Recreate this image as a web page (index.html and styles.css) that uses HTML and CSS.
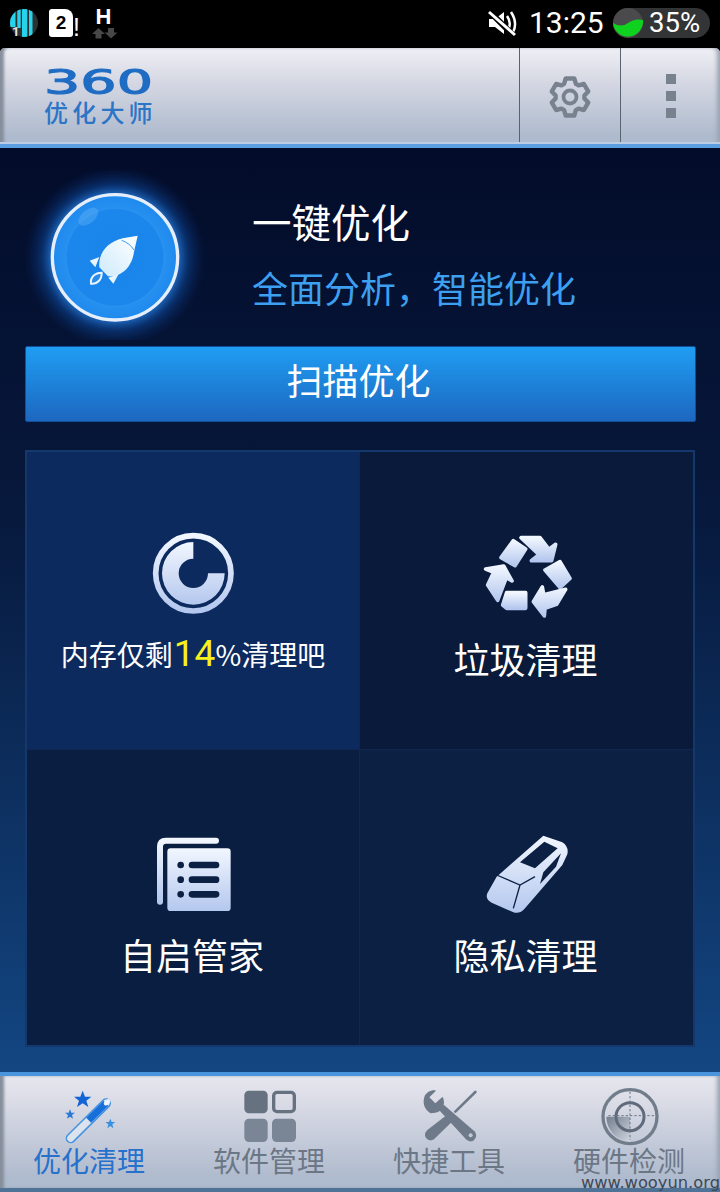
FILE: index.html
```html
<!DOCTYPE html>
<html lang="zh">
<head>
<meta charset="utf-8">
<title>360优化大师</title>
<link rel="stylesheet" href="styles.css">
</head>
<body>
<div class="page">
  <div class="status">
    <svg class="st-signal" width="40" height="40" viewBox="0 0 40 40">
      <defs><clipPath id="sigclip"><circle cx="24" cy="23" r="14"/></clipPath></defs>
      <circle cx="24" cy="23" r="14" fill="#2e3033"/>
      <g clip-path="url(#sigclip)" fill="#27d3ea">
        <rect x="10" y="9" width="5.500" height="18"/>
        <rect x="17.300" y="9" width="3.400" height="19"/>
        <rect x="22" y="9" width="5.300" height="28"/>
        <rect x="29" y="9" width="3.500" height="28"/>
      </g>
    </svg>
    <span class="st-one">1</span>
    <span class="st-sim">2</span>
    <span class="st-bang">!</span>
    <div class="st-h">
      <span class="st-h-letter">H</span>
      <svg width="26" height="11" viewBox="0 0 26 11"><path d="M6.500 0 L13 6 H9.500 V10.500 H3.500 V6 H0 Z" fill="#484848"/><path d="M16 0 H22 V4.500 H25.500 L19 10.500 L12.500 4.500 H16 Z" fill="#484848"/></svg>
    </div>
    <div class="st-right">
      <svg class="st-mute" width="30" height="28" viewBox="0 0 30 28">
        <path d="M1 9 H7 L16 2 V24 L7 17 H1 Z" fill="#fff"/>
        <path d="M19 6 Q24 13 20 20 M23 2 Q30 13 25 22" fill="none" stroke="#fff" stroke-width="2.500"/>
        <path d="M1 1 L26 26" stroke="#000" stroke-width="6"/>
        <path d="M1 2 L27 25" stroke="#fff" stroke-width="3"/>
      </svg>
      <span class="st-time">13:25</span>
      <div class="battery">
        <svg width="30" height="30" viewBox="0 0 30 30">
          <circle cx="15" cy="15" r="15" fill="#4a4a4c"/>
          <path d="M0 15 Q8 20 15 15 T30 12 A15 15 0 0 1 0 15 Z" fill="#0fd11f"/>
        </svg>
        <span class="batt-text">35%</span>
      </div>
    </div>
  </div>

  <header class="topbar">
    <div class="logo">
      <div class="logo-num"><span>360</span></div>
      <div class="logo-name">优化大师</div>
    </div>
    <div class="top-cell">
      <svg class="gear" width="48" height="48" viewBox="-24 -24 48 48">
        <polygon points="-5.900,-13.200 -4.300,-18.500 4.300,-18.500 5.900,-13.200 8.500,-11.700 13.900,-13 18.200,-5.600 14.400,-1.500 14.400,1.500 18.200,5.600 13.900,13 8.500,11.700 5.900,13.200 4.300,18.500 -4.300,18.500 -5.900,13.200 -8.500,11.700 -13.900,13 -18.200,5.600 -14.400,1.500 -14.400,-1.500 -18.200,-5.600 -13.900,-13 -8.500,-11.700" fill="none" stroke="#78828f" stroke-width="4.400" stroke-linejoin="round"/>
        <circle r="6.500" fill="none" stroke="#78828f" stroke-width="3.800"/>
      </svg>
    </div>
    <div class="top-cell top-menu">
      <i class="dot"></i><i class="dot"></i><i class="dot"></i>
    </div>
  </header>

  <main class="main">
    <section class="hero">
      <svg class="hero-icon" width="200" height="170" viewBox="0 0 600 510">
        <defs>
          <radialGradient id="glow" cx="50%" cy="50%" r="50%">
            <stop offset="0.68" stop-color="#2b8cf5" stop-opacity="0.75"/>
            <stop offset="0.80" stop-color="#0f58b8" stop-opacity="0.42"/>
            <stop offset="1" stop-color="#0a2a66" stop-opacity="0"/>
          </radialGradient>
          <radialGradient id="disc" cx="50%" cy="50%" r="50%">
            <stop offset="0" stop-color="#1983ea"/>
            <stop offset="0.76" stop-color="#1b87ec"/>
            <stop offset="0.79" stop-color="#2590ef"/>
            <stop offset="1" stop-color="#1f8aee"/>
          </radialGradient>
          <linearGradient id="rocket" x1="1" y1="0" x2="0" y2="1">
            <stop offset="0" stop-color="#ffffff"/>
            <stop offset="1" stop-color="#cdeafc"/>
          </linearGradient>
        </defs>
        <circle cx="285" cy="262" r="275" fill="url(#glow)"/>
        <circle cx="285" cy="262" r="188" fill="url(#disc)" stroke="#e6eefb" stroke-width="10"/>
        <circle cx="285" cy="262" r="148" fill="none" stroke="#3d9cf2" stroke-width="3" opacity="0.3"/>
        <ellipse cx="205" cy="140" rx="35" ry="20" fill="#7cc0f7" opacity="0.3" transform="rotate(-40 205 140)"/>
        <path d="M353 197 L308 205 C262 216 234 250 238 292 L264 319 C306 322 336 290 342 246 Z" fill="url(#rocket)"/>
        <path d="M305 211 Q330 220 342 240" fill="none" stroke="#3d9cf2" stroke-width="3"/>
        <path d="M209 272 L238 261 L226 292 Z M265 323 L296 312 L280 341 Z" fill="#e8f5fe"/>
        <path d="M245 308 C225 308 210 322 213 341 C232 344 246 328 245 308 Z" fill="#2a8cea" stroke="#eaf6fe" stroke-width="6"/>
      </svg>
      <div class="hero-text">
        <div class="hero-title">一键优化</div>
        <div class="hero-sub">全面分析，智能优化</div>
      </div>
    </section>

    <button class="scan">扫描优化</button>

    <section class="grid">
      <div class="cell cell-mem">
        <svg class="ic ic-mem" width="120" height="120" viewBox="0 0 360 360">
          <defs>
            <linearGradient id="lite" x1="0" y1="0" x2="0" y2="1">
              <stop offset="0" stop-color="#f2f7ff"/>
              <stop offset="1" stop-color="#b4c7ee"/>
            </linearGradient>
          </defs>
          <circle cx="193" cy="190" r="113" fill="none" stroke="url(#lite)" stroke-width="17"/>
          <path d="M193 96 A94 94 0 1 0 287 190 H237 A44 44 0 1 1 193 146 Z" fill="url(#lite)"/>
        </svg>
        <div class="mem-text">内存仅剩<span class="mem-num">14</span>%清理吧</div>
      </div>
      <div class="cell cell-junk">
        <svg class="ic ic-junk" width="120" height="110" viewBox="0 0 360 330">
          <g fill="url(#lite)" stroke="url(#lite)" stroke-width="11" stroke-linejoin="round">
            <path d="M145 62 L182 87 L150 137 L108 113 Z"/>
            <path d="M168 53 L225 53 L252 88 L272 73 L260 122 L199 122 L222 104 Z"/>
            <path d="M285 125 L315 175 L285 203 L240 150 Z"/>
            <path d="M232 201 L236 224 L302 208 L275 253 L240 265 L238 288 L205 245 Z"/>
            <path d="M125 218 L182 218 L182 265 L125 265 L113 255 Z"/>
            <path d="M62 147 L116 138 L141 183 L124 173 L98 241 L68 195 L86 157 Z"/>
          </g>
        </svg>
        <div class="cell-label">垃圾清理</div>
      </div>
      <div class="cell cell-auto">
        <svg class="ic ic-auto" width="110" height="100" viewBox="0 0 330 300">
          <path d="M60 230 V65 Q60 47 78 47 H228" fill="none" stroke="url(#lite)" stroke-width="18" stroke-linecap="round"/>
          <rect x="82" y="70" width="190" height="188" rx="10" fill="url(#lite)"/>
          <g fill="#0b2043">
            <circle cx="122" cy="120" r="10"/><circle cx="122" cy="164" r="10"/><circle cx="122" cy="208" r="10"/>
            <rect x="146" y="110" width="92" height="20" rx="10"/>
            <rect x="146" y="154" width="92" height="20" rx="10"/>
            <rect x="146" y="198" width="92" height="20" rx="10"/>
          </g>
        </svg>
        <div class="cell-label">自启管家</div>
      </div>
      <div class="cell cell-priv">
        <svg class="ic ic-priv" width="110" height="100" viewBox="0 0 330 300">
          <path d="M205 32 L262 52 Q282 65 277 88 L262 120 L150 250 Q135 268 115 262 L50 233 Q30 222 37 205 L65 155 Z" fill="url(#lite)"/>
          <path d="M208 50 L248 70 L180 130 L135 112 Z M258 85 L243 125 L195 177 L205 142 Z" fill="#0b2043"/>
          <path d="M65 150 L135 180 L180 155 M135 180 L115 250" fill="none" stroke="#0b2043" stroke-width="4"/>
        </svg>
        <div class="cell-label">隐私清理</div>
      </div>
    </section>
  </main>

  <nav class="tabs">
    <div class="tab tab-on">
      <svg class="ic" width="60" height="60" viewBox="180 84 180 180">
        <polygon points="248,92 255,110 274,110 259,122 265,141 248,130 231,141 237,122 222,110 241,110" fill="#1264d6"/>
        <polygon points="210,148 214,158 225,158 216,165 219,176 210,170 201,176 204,165 195,158 206,158" fill="#2a78d8"/>
        <polygon points="331,176 335,186 346,186 337,193 340,205 331,198 322,205 325,193 316,186 327,186" fill="#3a8fe2"/>
        <line x1="212" y1="235" x2="318" y2="130" stroke="#4492e0" stroke-width="30" stroke-linecap="round"/>
        <line x1="212" y1="235" x2="318" y2="130" stroke="#dbe3ef" stroke-width="21" stroke-linecap="round"/>
        <line x1="266" y1="181" x2="318" y2="130" stroke="#176fd9" stroke-width="21"/>
        <ellipse cx="321" cy="127" rx="7" ry="11" fill="#eef3fb" transform="rotate(45 321 127)"/>
      </svg>
      <span>优化清理</span>
    </div>
    <div class="tab">
      <svg class="ic" width="60" height="60" viewBox="720 84 180 180">
        <rect x="733" y="92" width="70" height="68" rx="14" fill="#667280"/>
        <rect x="821" y="97" width="62" height="58" rx="10" fill="none" stroke="#667280" stroke-width="10"/>
        <rect x="733" y="176" width="70" height="70" rx="14" fill="#7a8696"/>
        <rect x="816" y="176" width="72" height="70" rx="14" fill="#7a8696"/>
      </svg>
      <span>软件管理</span>
    </div>
    <div class="tab">
      <svg class="ic" width="60" height="60" viewBox="180 84 180 180">
        <path d="M228 92 L208 112 L226 130 L248 110 C258 130 248 155 226 158 L212 160 C194 150 186 130 194 108 C200 96 216 88 228 92 Z" fill="#6e7a89"/>
        <path d="M235 148 L252 135 L345 215 Q354 232 340 242 Q328 248 318 238 Z" fill="#6e7a89"/>
        <circle cx="332" cy="226" r="6" fill="#c0c9d8"/>
        <line x1="346" y1="96" x2="286" y2="155" stroke="#6e7a89" stroke-width="8" stroke-linecap="round"/>
        <path d="M272 156 L290 172 L222 238 Q208 246 198 234 Q190 222 202 210 Z" fill="#6e7a89"/>
      </svg>
      <span>快捷工具</span>
    </div>
    <div class="tab">
      <svg class="ic" width="60" height="60" viewBox="720 84 180 180">
        <defs>
          <linearGradient id="sweep" x1="0" y1="0" x2="1" y2="1">
            <stop offset="0" stop-color="#727d8c"/>
            <stop offset="1" stop-color="#d0d6e0"/>
          </linearGradient>
        </defs>
        <circle cx="810" cy="170" r="81" fill="none" stroke="#727d8c" stroke-width="10"/>
        <path d="M739 170 H810 V245 A75 75 0 0 1 739 170 Z" fill="url(#sweep)"/>
        <circle cx="810" cy="170" r="42" fill="none" stroke="#5f6b7a" stroke-width="9"/>
        <path d="M810 95 V240 M745 167 H882" stroke="#6a7585" stroke-width="3" stroke-dasharray="7 6" fill="none"/>
      </svg>
      <span>硬件检测</span>
    </div>
    <div class="watermark">www.wooyun.org</div>
  </nav>
</div>
</body>
</html>
```

FILE: styles.css
```css
html, body {
  margin: 0;
  padding: 0;
  background: #000;
}
body {
  width: 720px;
  height: 1192px;
  overflow: hidden;
  font-family: "Noto Sans CJK SC", "Liberation Sans", sans-serif;
}
.page {
  width: 720px;
  height: 1192px;
  display: flex;
  flex-direction: column;
  position: relative;
}

/* status bar */
.status {
  height: 48px;
  flex: none;
  display: flex;
  align-items: flex-start;
  background: #000;
  color: #fff;
  position: relative;
}
.st-signal { flex: none; }
.st-one {
  position: absolute;
  left: 12px;
  top: 24px;
  font: 700 13px/16px "Roboto", sans-serif;
  color: #e4e4e4;
}
.st-sim {
  width: 24px;
  height: 28px;
  margin: 9px 0 0 9px;
  background: #fff;
  color: #000;
  border-radius: 3px 8px 3px 3px;
  font: 700 19px/28px "Liberation Sans", sans-serif;
  text-align: center;
}
.st-bang {
  font: 400 25px/26px "Liberation Sans", sans-serif;
  margin: 14px 0 0 0;
  width: 7px;
  text-align: center;
}
.st-h {
  margin: 6px 0 0 11px;
  width: 28px;
  display: flex;
  flex-direction: column;
  align-items: center;
}
.st-h-letter {
  font: 700 22px/22px "Liberation Sans", sans-serif;
  height: 21px;
  margin: 0 3px 1px 0;
}
.st-right {
  margin-left: auto;
  display: flex;
  align-items: center;
  height: 46px;
  padding-right: 10px;
}
.st-mute { margin-right: 11px; margin-top: 2px; }
.st-time {
  font: 30px/48px "Roboto", sans-serif;
  width: 84px;
}
.battery {
  width: 97px;
  height: 30px;
  border-radius: 15px;
  background: #333436;
  display: flex;
  align-items: center;
  gap: 6px;
}
.batt-text { font: 27.500px/30px "Roboto", sans-serif; }

/* top bar */
.topbar {
  height: 100px;
  flex: none;
  box-sizing: border-box;
  display: flex;
  background: linear-gradient(#efeff5 0, #d9dbe5 30%, #aebacd 92%);
  border-bottom: 4px solid #5b9fe2;
  box-shadow: inset 5px 0 3px -1px #868e9c, inset -5px 0 4px -2px #9aa3b2;
  border-radius: 5px 5px 0 0;
  position: relative;
}
.topbar::after {
  content: "";
  position: absolute;
  left: 0;
  right: 0;
  bottom: 0;
  height: 2px;
  background: #bccce2;
}
.logo {
  flex: 1;
  padding: 21px 0 0 44px;
  color: #2c74c6;
}
.logo-num {
  height: 25px;
  width: 110px;
  font: 400 34px/26px "DejaVu Sans", sans-serif;
  color: #1f6cc4;
  -webkit-text-stroke: 1.100px #1f6cc4;
}
.logo-num span {
  display: inline-block;
  transform: scaleX(1.68);
  transform-origin: 0 50%;
}
.logo-name {
  margin-top: 6px;
  font-size: 24px;
  font-weight: 500;
  line-height: 24px;
  letter-spacing: 4.200px;
  white-space: nowrap;
}
.top-cell {
  width: 101px;
  border-left: 1px solid #59626f;
  display: flex;
  align-items: center;
  justify-content: center;
  height: 96px;
  box-sizing: border-box;
}
.top-cell + .top-cell { width: 100px; }
.gear { margin: 1px 0 0 0; }
.top-menu {
  flex-direction: column;
  gap: 7px;
}
.dot {
  display: block;
  width: 10px;
  height: 10px;
  background: #78828f;
}

/* main */
.main {
  flex: 1;
  display: flex;
  flex-direction: column;
  background: linear-gradient(#030c2a 0, #07193d 40%, #134682 100%);
}
.hero {
  display: flex;
  padding: 22px 0 6px 20px;
  height: 198px;
  box-sizing: border-box;
  flex: none;
}
.hero-icon { flex: none; filter: blur(0.5px); }
.hero-text {
  margin-left: 32px;
  padding-top: 26px;
}
.hero-title {
  font-size: 39.500px;
  line-height: 50px;
  color: #fff;
}
.hero-sub {
  margin-top: 16px;
  font-size: 36px;
  line-height: 50px;
  color: #3c9ff0;
}
.scan {
  flex: none;
  display: block;
  margin: 0 24px 0 25px;
  height: 76px;
  width: 671px;
  box-sizing: border-box;
  border: 1px solid #144f99;
  border-radius: 2px;
  background: linear-gradient(#1f9df3, #1d67bf);
  color: #fff;
  font-family: inherit;
  font-size: 36px;
  padding: 0 4px 10px 0;
}
.grid {
  margin: 28px 25px 0;
  width: 670px;
  height: 597px;
  box-sizing: border-box;
  border: 2px solid #14386c;
  display: grid;
  grid-template-columns: 333px 333px;
  grid-template-rows: 297px 296px;
  background: #0a1a3a;
}
.cell {
  display: flex;
  flex-direction: column;
  align-items: center;
  color: #fff;
  box-sizing: border-box;
}
.cell-mem { background: #0d2a5e; border-right: 1px solid #10284f; padding-top: 58px; }
.cell-junk { background: #0a1a3a; padding-top: 68px; }
.cell-auto { background: #0a1e41; border-top: 1px solid #10284f; border-right: 1px solid #10284f; padding-top: 75px; }
.cell-priv { background: #0b2043; border-top: 1px solid #10284f; padding-top: 75px; }
.ic { flex: none; filter: blur(0.4px); }
.ic-mem { margin: 0 8px -2px 0; }
.ic-junk { margin: 0 4px -3px 0; }
.ic-auto { margin-left: 4px; }
.ic-priv { margin-left: 6px; }
.cell-label {
  font-size: 36px;
  line-height: 50px;
  margin-top: 6px;
  padding-right: 2px;
}
.cell-auto .cell-label,
.cell-priv .cell-label { margin-top: 4px; }
.mem-text {
  font-size: 28px;
  line-height: 50px;
  white-space: nowrap;
  margin-top: 1px;
}
.mem-num {
  font-family: "Roboto", sans-serif;
  font-size: 37px;
  color: #f6f01e;
  margin: 0 0 0 1px;
}

/* bottom tabs */
.tabs {
  flex: none;
  height: 120px;
  box-sizing: border-box;
  display: grid;
  grid-template-columns: repeat(4, 180px);
  border-top: 4px solid #4a94dd;
  border-bottom: 4px solid #4f7397;
  background: linear-gradient(#e6e6ee, #dcdde7 20%, #aebacd 92%);
  box-shadow: inset 5px 0 3px -1px #868e9c, inset -5px 0 4px -2px #9aa3b2;
  position: relative;
}
.tab {
  display: flex;
  flex-direction: column;
  align-items: center;
  padding-top: 12px;
  color: #6c7786;
  font-size: 28px;
  line-height: 28px;
}
.tab svg { margin-bottom: -2px; }
.tab span { padding-right: 2px; }
.tab-on { color: #2671cc; }
.watermark {
  position: absolute;
  right: 0;
  bottom: -2px;
  font: 16.300px/15px "DejaVu Sans", sans-serif;
  color: #3e4756;
  white-space: nowrap;
}
```
